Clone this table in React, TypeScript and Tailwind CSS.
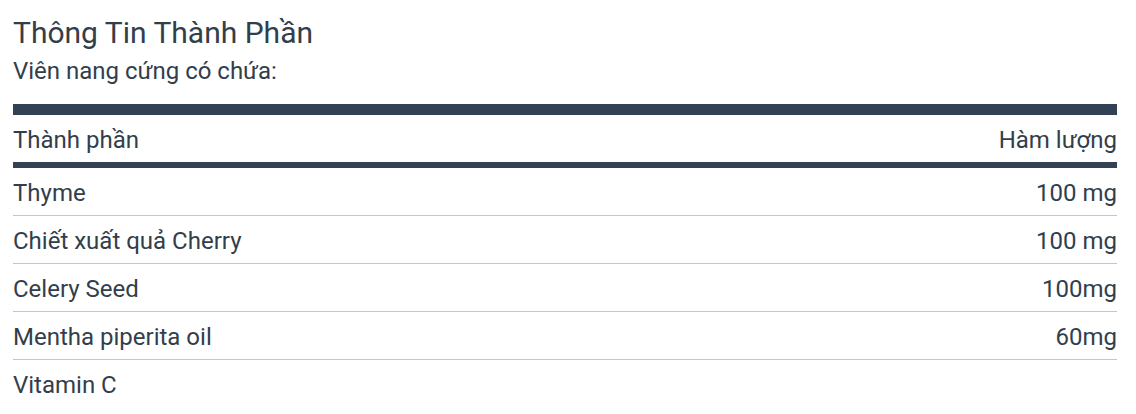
const rows = [
  { name: "Thyme", amount: "100 mg" },
  { name: "Chiết xuất quả Cherry", amount: "100 mg" },
  { name: "Celery Seed", amount: "100mg" },
  { name: "Mentha piperita oil", amount: "60mg" },
  { name: "Vitamin C", amount: "" },
];

export default function App() {
  return (
    <div className="min-h-screen bg-white pl-[13px] pr-[19px] pt-[15px] font-['Roboto',sans-serif] text-[#333e4b]">
      <h2 className="text-[30px] leading-[36px] font-normal">Thông Tin Thành Phần</h2>
      <p className="mt-[6px] text-[24px] leading-[28px]">Viên nang cứng có chứa:</p>

      <div className="mt-[19px] border-t-[11px] border-[#334155]">
        <div className="flex h-[47px] items-center justify-between border-b-[6px] border-[#334155] text-[24px] box-content">
          <span className="translate-y-px">Thành phần</span>
          <span className="translate-y-px">Hàm lượng</span>
        </div>
        {rows.map((row, i) => (
          <div
            key={row.name}
            className={
              "flex h-[47px] items-center justify-between text-[24px] box-content " +
              (i < rows.length - 1 ? "border-b border-[#bfc7d4]" : "")
            }
          >
            <span className="translate-y-px">{row.name}</span>
            <span className="translate-y-px">{row.amount}</span>
          </div>
        ))}
      </div>
    </div>
  );
}
